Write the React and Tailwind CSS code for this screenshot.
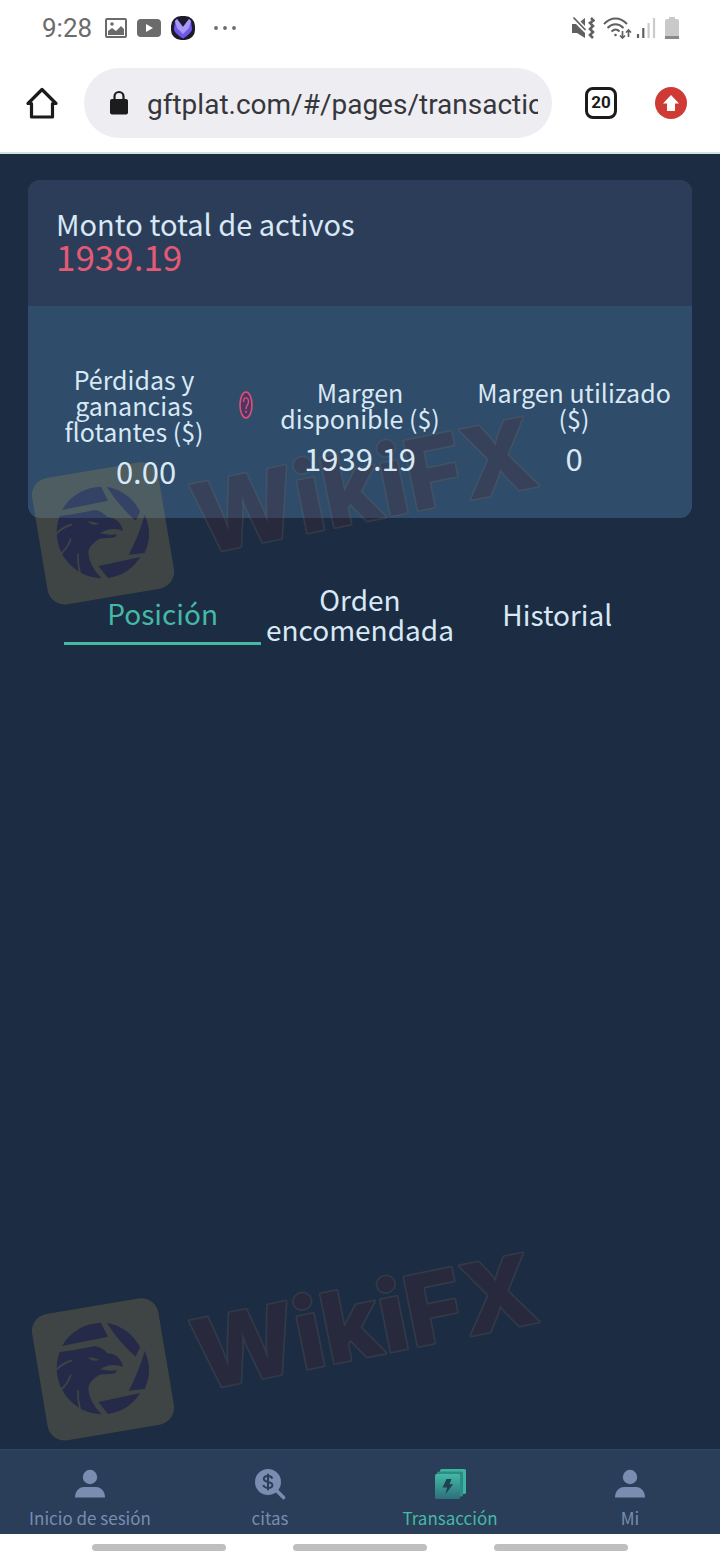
import { useState } from "react";
import clsx from "clsx";

const tabs = ["Posición", "Orden encomendada", "Historial"];

const navItems = [
  { label: "Inicio de sesión", Icon: UserIcon },
  { label: "citas", Icon: QuotesIcon },
  { label: "Transacción", Icon: TradeIcon },
  { label: "Mi", Icon: UserIcon },
];

function UserIcon() {
  return (
    <svg viewBox="0 0 32 32" className="size-8" fill="#788db0" aria-hidden="true">
      <circle cx="16" cy="9" r="7.2" />
      <path d="M1 29.500c0-6 4-10.500 9-10.500h12c5 0 9 4.500 9 10.500z" />
    </svg>
  );
}

function QuotesIcon() {
  return (
    <svg viewBox="0 0 32 32" className="size-8" aria-hidden="true">
      <path d="M23 23l6.500 6.500" stroke="#788db0" strokeWidth="3.600" strokeLinecap="round" />
      <circle cx="14" cy="14" r="13" fill="#788db0" />
      <g fill="none" stroke="#2b3e59" strokeWidth="2">
        <path d="M18.200 10.600c-.5-1.700-2-2.500-4.200-2.500-2.500 0-4.200 1-4.200 2.900 0 4 8.600 1.800 8.600 5.900 0 1.900-1.800 3-4.400 3-2.500 0-4.200-1-4.600-3" />
        <path d="M14 5.800v16.400" />
      </g>
    </svg>
  );
}

function TradeIcon() {
  return (
    <svg viewBox="0 0 32 32" className="size-8" aria-hidden="true">
      <defs>
        <linearGradient id="trade" x1="0" y1="0" x2="0" y2="1">
          <stop offset="0" stopColor="#43b9a4" />
          <stop offset="1" stopColor="#2d6f7d" />
        </linearGradient>
      </defs>
      <rect x="6" y="1" width="26" height="25" rx="1.500" fill="#3cb49e" />
      <rect x="3" y="3.500" width="26" height="25" rx="1.500" fill="#2c8d86" />
      <rect x="1" y="6" width="25" height="25" rx="1.500" fill="url(#trade)" />
      <path d="M12.500 11h5l-2 5.200h3.700L11.500 26l1.600-6.600H8.600z" fill="#21414f" />
    </svg>
  );
}

function StatusBar() {
  return (
    <div className="flex h-14 items-center justify-between pr-10 pl-[42px] text-[#6b6b6b]">
      <div className="flex items-center">
        <span className="mr-3 text-[26px]">9:28</span>
        <svg viewBox="0 0 22 20" className="mr-2 h-5 w-6" aria-hidden="true">
          <rect x="1" y="1" width="20" height="18" rx="1" fill="none" stroke="currentColor" strokeWidth="2" />
          <path d="M3 17v-4l4-3 4 3 5-5 3 3v6z" fill="currentColor" />
          <circle cx="7" cy="6" r="1.800" fill="currentColor" />
        </svg>
        <svg viewBox="0 0 26 20" className="mr-2 h-5 w-[26px]" aria-hidden="true">
          <rect x="1" y="1" width="24" height="18" rx="4" fill="currentColor" />
          <path d="M10 6v8l7-4z" fill="#fff" />
        </svg>
        <svg viewBox="0 0 26 26" className="mr-4 size-[26px]" aria-hidden="true">
          <rect x="1" y="1" width="24" height="24" rx="10" fill="#1d1b2b" />
          <path d="M5 6l2-2 6 8 6-8 2 2 1 8c0 3-5 7-9 9.500C9 21 4 17 4 14z" fill="#6f56e8" />
          <path d="M5 6l2-2 6 8 6-8 2 2-2 7-6 6-6-6z" fill="#a598f7" />
        </svg>
        <svg viewBox="0 0 26 6" className="h-[6px] w-[26px]" fill="currentColor" aria-hidden="true">
          <circle cx="4" cy="3" r="1.900" />
          <circle cx="13" cy="3" r="1.900" />
          <circle cx="22" cy="3" r="1.900" />
        </svg>
      </div>
      <div className="flex items-center">
        <svg viewBox="0 0 24 24" className="mr-2 size-6" aria-hidden="true">
          <path d="M1 8h4l9 9v5l-8-5H1zM9.500 5.500L14 2v8z" fill="#606060" />
          <path d="M2.500 1.500l12 12.500" stroke="#606060" strokeWidth="1.800" />
          <path d="M20 2l2.500 2.500-3.500 2.500 3 3-3 3 3 3-3 3 3 3" fill="none" stroke="#606060" strokeWidth="2.600" />
        </svg>
        <svg viewBox="0 0 29 24" className="mr-1 h-6 w-[29px]" fill="none" stroke="#606060" strokeWidth="2" aria-hidden="true">
          <path d="M1 8C8 .500 17 .500 24 8M4.500 12c5-5 11-5 16 0M8.500 15.500c3-2.800 5.500-2.800 8 0" />
          <circle cx="12.500" cy="19" r="1.300" fill="#606060" stroke="none" />
          <path d="M19.500 15v7M17 19.500l2.500 2.500 2.500-2.500M25.500 21v-7M23 16.500l2.500-2.500 2.500 2.500" strokeWidth="1.700" />
        </svg>
        <svg viewBox="0 0 20 22" className="mr-2 h-[22px] w-5" aria-hidden="true">
          <path d="M2 17v4M7.300 11v10" stroke="#606060" strokeWidth="2.200" />
          <path d="M12.600 6v15M18 1v20" stroke="#cbcbcb" strokeWidth="2.200" />
        </svg>
        <svg viewBox="0 0 16 24" className="h-6 w-4" aria-hidden="true">
          <path d="M5 1h6v2h2a2 2 0 0 1 2 2v18H1V5a2 2 0 0 1 2-2h2z" fill="#c9c9c9" />
          <path d="M1 20h14v3H1z" fill="#8a8a8a" />
        </svg>
      </div>
    </div>
  );
}

function AddressBar() {
  return (
    <div className="flex items-center border-b-2 border-[#d3e2e2] pt-3 pr-8 pb-[14px] pl-6">
      <button type="button" aria-label="Home" className="mr-6">
        <svg viewBox="0 0 36 36" className="size-9" fill="none" stroke="#1b1b1b" strokeWidth="3.200" strokeLinejoin="round" strokeLinecap="round" aria-hidden="true">
          <path d="M18 4.500L4 18.500h3.500V32h21V18.500H32z" />
        </svg>
      </button>
      <div className="flex h-[70px] min-w-0 flex-1 items-center rounded-full bg-[#eeedf2] pr-[14px] pl-6">
        <svg viewBox="0 0 22 26" className="mr-[17px] h-[26px] w-[22px] shrink-0" aria-hidden="true">
          <rect x="2" y="9" width="18" height="15.500" rx="2" fill="#1c1c1e" />
          <path d="M6.500 10V6.500a4.500 4.500 0 0 1 9 0V10" fill="none" stroke="#1c1c1e" strokeWidth="2.200" />
        </svg>
        <input
          type="text"
          aria-label="Address"
          defaultValue="gftplat.com/#/pages/transaction"
          className="w-full min-w-0 bg-transparent pt-[3px] text-[28px] text-[#35373c] outline-none"
        />
      </div>
      <button type="button" aria-label="Open tabs" className="mr-[37px] ml-[33px] flex size-8 items-center justify-center rounded-lg border-3 border-[#1b1b1b] text-[17px] font-bold text-[#1b1b1b]">
        20
      </button>
      <button type="button" aria-label="Update">
        <svg viewBox="0 0 34 34" className="size-[34px]" aria-hidden="true">
          <circle cx="17" cy="17" r="16" fill="#cf3a34" />
          <path d="M17 9l8 8.500h-4V25h-8v-7.500H9z" fill="#fff" />
        </svg>
      </button>
    </div>
  );
}

function Metric({ label, value, help }) {
  return (
    <div className="relative z-10 flex-1 text-center text-[#d8e8f5]">
      <div className="flex items-center text-[25px] leading-[26px]">
        <span className="flex-1">{label}</span>
        {help && (
          <button type="button" aria-label="Ayuda" className="ml-[10px]">
            <svg viewBox="0 0 14 28" className="h-7 w-[14px]" fill="none" stroke="#e0507a" aria-hidden="true">
              <ellipse cx="7" cy="14" rx="6" ry="13" strokeWidth="1.600" fill="#4b3563" />
              <path d="M4.500 11c0-5.500 5-5.500 5 0 0 3-2.500 3.500-2.500 7M7 19.500v2.500" strokeWidth="1.400" />
            </svg>
          </button>
        )}
      </div>
      <div className="mt-3 text-[31px] leading-[30px]">{value}</div>
    </div>
  );
}

function Watermark({ className }) {
  return (
    <svg viewBox="0 0 1620 630" className={clsx("pointer-events-none absolute left-5 h-[210px] w-[540px] overflow-visible opacity-25", className)} aria-hidden="true">
      <rect x="57" y="196" width="384" height="384" rx="52" fill="#ab9048" transform="rotate(-9.500 249 388)" />
      <g fill="#40285a">
        <path d="M126 318A138 138 0 0 1 243 248L264 290Z" />
        <path d="M260 248A138 138 0 0 1 360 322L347 350Q300 310 260 248Z" />
        <path d="M374 332A138 138 0 0 1 374 447L326 452Q358 392 374 332Z" />
        <path d="M235 486L361 459A138 138 0 0 1 264 522Z" />
        <path d="M119 336Q170 330 225 318Q248 322 262 340Q300 342 309 381Q290 372 264 377Q250 380 240 388Q268 395 291 391Q290 402 268 402Q248 402 238 404Q205 425 205 445Q206 485 245 523A138 138 0 0 1 119 336Z" />
      </g>
      <g fill="none" stroke="#ab9048" strokeWidth="5" strokeLinecap="round">
        <path d="M154 362Q128 370 110 388M152 406Q142 434 122 450M174 452Q172 478 180 506" />
      </g>
      <path d="M204 352Q220 353 238 359Q218 368 204 352Z" fill="#ab9048" />
      <text
        x="544"
        y="452"
        transform="rotate(-11.500 544 452)"
        fill="#50222c"
        stroke="#75655a"
        strokeWidth="10"
        strokeLinejoin="round"
        paintOrder="stroke"
        className="font-['Inter',sans-serif] text-[292px] font-extrabold"
      >
        WikiFX
      </text>
    </svg>
  );
}

export default function App() {
  const [tab, setTab] = useState(0);

  return (
    <div className="relative flex min-h-screen flex-col overflow-hidden bg-[#1b2c43] font-['Noto_Sans_CJK_SC',sans-serif]">
      <header className="bg-white font-['Roboto',sans-serif]">
        <StatusBar />
        <AddressBar />
      </header>

      <main className="flex-1 px-7 pt-[26px]">
        <section className="overflow-hidden rounded-xl bg-[#2f4c6a]">
          <div className="bg-[#2b3d59] px-7 pt-7 pb-8">
            <h1 className="text-[29px] leading-[30px] text-[#d8e8f5]">Monto total de activos</h1>
            <p className="text-[35px] leading-[36px] text-[#e45a74]">1939.19</p>
          </div>
          <div className="flex items-center px-[11px] pt-[60px] pb-8">
            <Metric label="Pérdidas y ganancias flotantes ($)" value="0.00" help />
            <Metric label="Margen disponible ($)" value="1939.19" />
            <Metric label="Margen utilizado ($)" value="0" />
          </div>
        </section>

        <div role="tablist" className="mt-[66px] flex items-stretch px-9 text-[28px] leading-[30px]">
          {tabs.map((name, i) => (
            <button
              key={name}
              type="button"
              role="tab"
              aria-selected={tab === i}
              onClick={() => setTab(i)}
              className={clsx(
                "min-w-0 flex-1 pb-px",
                tab === i ? "border-b-3 border-[#45b9a5] text-[#45b9a5]" : "text-[#d8e8f5]"
              )}
            >
              {name}
            </button>
          ))}
        </div>
      </main>

      <nav className="flex border-t border-[#2f4763] bg-[#2b3e59] pt-[18px] pb-1">
        {navItems.map(({ label, Icon }, i) => (
          <a
            key={label}
            href="#"
            className={clsx(
              "flex flex-1 flex-col items-center gap-[6px] text-[17px] leading-6",
              i === 2 ? "text-[#45b9a5]" : "text-[#788db0]"
            )}
          >
            <Icon />
            {label}
          </a>
        ))}
      </nav>

      <div className="flex h-[26px] items-center justify-center gap-[67px] bg-white">
        <span className="h-[7px] w-[134px] rounded-full bg-[#bfbfbf]" />
        <span className="h-[7px] w-[134px] rounded-full bg-[#bfbfbf]" />
        <span className="h-[7px] w-[134px] rounded-full bg-[#bfbfbf]" />
      </div>

      <Watermark className="top-[404px]" />
      <Watermark className="bottom-[110px]" />
    </div>
  );
}
